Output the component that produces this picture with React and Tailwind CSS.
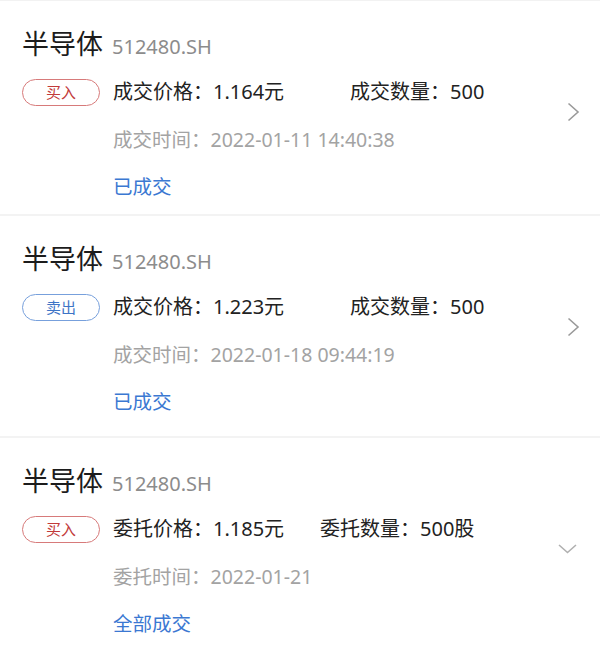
import React from 'react';

const FONT = { fontFamily: '"Noto Sans", "Noto Sans CJK SC", sans-serif' };

const orders = [
  {
    side: 'buy',
    priceLabel: '成交价格',
    price: '1.164元',
    qtyLabel: '成交数量',
    qty: '500',
    timeLabel: '成交时间',
    time: '2022-01-11 14:40:38',
    status: '已成交',
    colWidth: 'w-[237px]',
    arrow: 'right',
  },
  {
    side: 'sell',
    priceLabel: '成交价格',
    price: '1.223元',
    qtyLabel: '成交数量',
    qty: '500',
    timeLabel: '成交时间',
    time: '2022-01-18 09:44:19',
    status: '已成交',
    colWidth: 'w-[237px]',
    arrow: 'right',
  },
  {
    side: 'buy',
    priceLabel: '委托价格',
    price: '1.185元',
    qtyLabel: '委托数量',
    qty: '500股',
    timeLabel: '委托时间',
    time: '2022-01-21',
    status: '全部成交',
    colWidth: 'w-[207px]',
    arrow: 'down',
  },
];

const SideBadge = ({ side }) => {
  const buy = side === 'buy';
  return (
    <div
      className={
        buy
          ? 'flex h-[27px] w-[78px] shrink-0 items-center justify-center rounded-full border border-[#d77a7a] text-[15px] leading-none text-[#c23a3a]'
          : 'flex h-[27px] w-[78px] shrink-0 items-center justify-center rounded-full border border-[#77a0dc] text-[15px] leading-none text-[#3d74c6]'
      }
    >
      {buy ? '买入' : '卖出'}
    </div>
  );
};

const Arrow = ({ dir }) =>
  dir === 'right' ? (
    <svg width="13" height="20" viewBox="0 0 13 20" fill="none">
      <polyline points="1.5,1.5 11,10 1.5,18.5" stroke="#9a9a9a" strokeWidth="1.6" />
    </svg>
  ) : (
    <svg width="19" height="10" viewBox="0 0 19 10" fill="none" className="mr-[3px]">
      <polyline points="1,1 9.5,8.5 18,1" stroke="#b0b0b0" strokeWidth="1.6" />
    </svg>
  );

const OrderCard = ({ order, first }) => (
  <div className={first ? 'flex pl-[22px] pr-[20px] pt-[26px] pb-[13px]' : 'flex pl-[22px] pr-[20px] pt-[26px] pb-[20px]'}>
    <div className="flex-1">
      {/* name + code */}
      <div className="flex h-[34px] items-baseline">
        <span className="text-[27px] leading-[34px] text-[#1c1c1c]">半导体</span>
        <span className="ml-[9px] text-[20px] leading-[34px] text-[#8c8c8c]">512480.SH</span>
      </div>
      {/* side + price / quantity */}
      <div className="mt-[17px] flex h-[28px] items-center">
        <SideBadge side={order.side} />
        <div className="ml-[13px] flex text-[20px] leading-[28px] text-[#222]">
          <span className={order.colWidth}>
            {order.priceLabel}：{order.price}
          </span>
          <span>
            {order.qtyLabel}：{order.qty}
          </span>
        </div>
      </div>
      <div className="mt-[20px] pl-[91px] text-[19.5px] leading-[28px] text-[#a3a3a3]">
        {order.timeLabel}：{order.time}
      </div>
      <div className="mt-[19px] pl-[91px] text-[19.5px] leading-[28px] text-[#3b78d2]">{order.status}</div>
    </div>
    <div className="flex items-start justify-end pt-[75px]">
      <div className="flex h-[20px] items-center">
        <Arrow dir={order.arrow} />
      </div>
    </div>
  </div>
);

const App = () => {
  return (
    <div className="min-h-screen w-full bg-white" style={FONT}>
      <div className="h-[1px] bg-[#f2f2f2]" />
      {orders.map((order, i) => (
        <div key={i}>
          <OrderCard order={order} first={i === 0} />
          {i < orders.length - 1 && <div className="h-[2px] bg-[#f3f3f3]" />}
        </div>
      ))}
    </div>
  );
};

export default App;
